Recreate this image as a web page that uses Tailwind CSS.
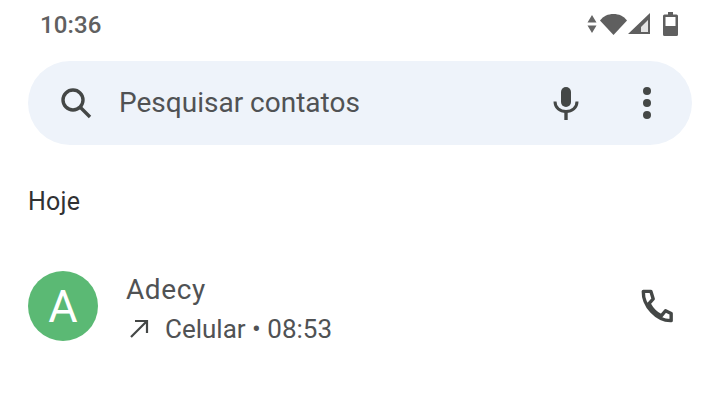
<!DOCTYPE html>
<html>
<head>
<meta charset="utf-8">
<script src="https://cdn.jsdelivr.net/npm/@tailwindcss/browser@4"></script>
</head>
<body class="w-[720px] h-[406px] bg-white overflow-hidden font-['Roboto',sans-serif] text-[#444746]">
<div class="h-[50px] flex items-center justify-between pl-[40px] pr-[42px]">
  <span class="text-[24px] leading-none font-medium text-[#606060] tracking-[0.1px] -mt-[1px]">10:36</span>
  <div class="flex items-center -mt-[2px]">
    <svg width="10" height="20" viewBox="0 0 10 20" class="mr-[3px]"><path d="M5 1 9.500 8.500H.5zM5 19 .5 11.500h9z" fill="#666"/></svg>
    <svg width="27" height="22" viewBox="0 0 27 22"><path d="M0 7.500C3.500 3 8 1 13.500 1s10 2 13.500 6.500L13.500 22z" fill="#5f5f5f"/></svg>
    <svg width="23" height="22" viewBox="0 0 23 22" class="ml-[1px]"><path d="M20 7 13 14V19H20z" fill="#e4e4e4"/><path fill-rule="evenodd" d="M22 0V21H0zM20 7 13 14V19H20z" fill="#5f5f5f"/></svg>
    <svg width="15" height="24" viewBox="0 0 15 24" class="ml-[12px]"><path fill-rule="evenodd" d="M5 0H10V2.500H13.500A1.500 1.500 0 0 1 15 4V22.500A1.500 1.500 0 0 1 13.500 24H1.500A1.500 1.500 0 0 1 0 22.500V4A1.500 1.500 0 0 1 1.500 2.500H5zM2.500 5V14H12.500V5z" fill="#5f5f5f"/></svg>
  </div>
</div>
<div class="mx-[28px] mt-[11px] h-[84px] rounded-[42px] bg-[#eef3fa] flex items-center pl-[32px] pr-[41px]">
  <svg width="32" height="32" viewBox="0 0 32 32" class="shrink-0"><circle cx="13" cy="13" r="10" fill="none" stroke="#444746" stroke-width="3.400"/><path d="M20.500 20.500 30 30" stroke="#444746" stroke-width="3.400"/></svg>
  <span class="ml-[27px] text-[28px] leading-none text-[#505254]">Pesquisar contatos</span>
  <svg width="26" height="33" viewBox="0 0 26 33" class="ml-auto mr-[64px] shrink-0"><rect x="8" y="0" width="10" height="20" rx="5" fill="#444746"/><path d="M2 14.500C2 21 7 24.500 13 24.500S24 21 24 14.500" fill="none" stroke="#444746" stroke-width="3"/><path d="M13 24V33" stroke="#444746" stroke-width="3.400"/></svg>
  <div class="flex flex-col gap-[4px]">
    <span class="w-[8px] h-[8px] rounded-full bg-[#444746]"></span>
    <span class="w-[8px] h-[8px] rounded-full bg-[#444746]"></span>
    <span class="w-[8px] h-[8px] rounded-full bg-[#444746]"></span>
  </div>
</div>
<div class="ml-[28px] mt-[43px] text-[25px] leading-[28px] tracking-[0.2px] text-[#303133]">Hoje</div>
<div class="mt-[55px] ml-[28px] mr-[46px] flex items-center h-[70px]">
  <div class="w-[70px] h-[70px] rounded-full bg-[#5bb974] flex items-center justify-center text-white text-[45px] leading-none shrink-0">A</div>
  <div class="ml-[28px] flex flex-col">
    <span class="text-[28px] leading-[32px] text-[#505254] tracking-[0.6px] mt-[5px]">Adecy</span>
    <div class="flex items-center mt-[8px] ml-[3px]">
      <svg width="20" height="20" viewBox="0 0 20 20"><path d="M2 18 18 2M6 2H18V14" fill="none" stroke="#444746" stroke-width="2.200"/></svg>
      <span class="ml-[16px] text-[26px] leading-[30px] text-[#505254]">Celular • 08:53</span>
    </div>
  </div>
  <svg width="34" height="34" viewBox="0 0 36 36" class="ml-auto shrink-0"><path d="M3.500 2.500H11.500L14 10.500 9.500 15.500C13 22 17 26 22.500 28.500L27 23 33 26V33.500C18 34 3 18 3.500 2.500Z" fill="none" stroke="#444746" stroke-width="3.600" stroke-linejoin="round"/></svg>
</div>
</body>
</html>
